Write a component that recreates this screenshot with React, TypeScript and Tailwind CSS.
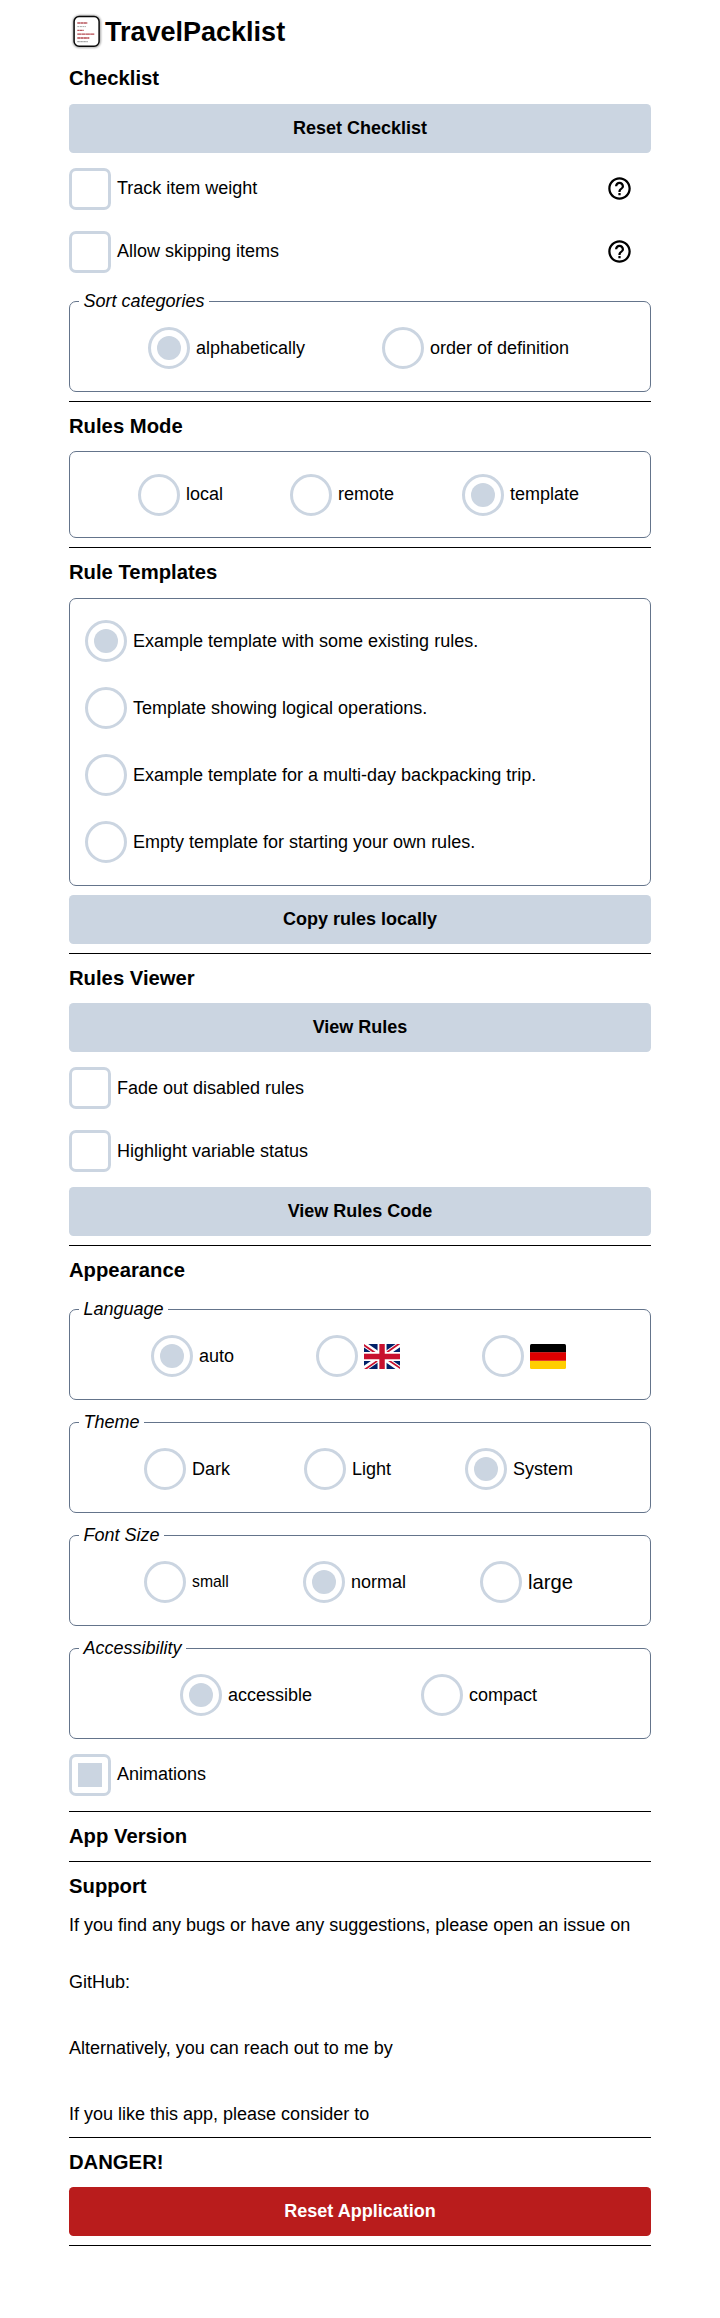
import type { ReactNode } from "react";
import { MdHelpOutline } from "react-icons/md";

function Logo() {
  return (
    <svg width="36" height="40" viewBox="0 0 36 40" className="shrink-0">
      <defs>
        <filter id="soft" x="-20%" y="-20%" width="140%" height="140%">
          <feGaussianBlur stdDeviation="0.9" />
        </filter>
      </defs>
      <rect x="4.8" y="5.2" width="26" height="30.6" rx="5.5" fill="none" stroke="#000" strokeOpacity="0.5" strokeWidth="1.6" filter="url(#soft)" />
      <rect x="5.1" y="5.5" width="25" height="29.8" rx="5" fill="#fff" stroke="#0a0a0a" strokeWidth="1.5" />
      <g fill="none" strokeWidth="1.3">
        <path d="M8.3 12h10.2" stroke="#b8555c" strokeDasharray="3 .3" />
        <path d="M8.3 15.6h8.7" stroke="#a8a8a8" strokeWidth="1" strokeDasharray="2 .6" />
        <path d="M8.3 19.4h6.4" stroke="#b8555c" strokeDasharray="2.4 .3" />
        <path d="M8.3 23.1h17.3" stroke="#b5484f" strokeDasharray="4 .3" />
        <path d="M8.3 27h12" stroke="#b5484f" strokeDasharray="3 .3" />
        <path d="M8.3 30.7h10.5" stroke="#8f8f8f" strokeWidth="1" strokeDasharray="2.5 .5" />
      </g>
    </svg>
  );
}

function FlagGB() {
  return (
    <svg width="36" height="25" viewBox="0 0 640 444" preserveAspectRatio="none">
      <path fill="#012169" d="M0 0h640v444H0z" />
      <path fill="#fff" d="m75 0 244 168L562 0h78v58L400 223l240 164v57h-80L320 279 81 444H0v-56l239-164L0 61V0z" />
      <path fill="#c8102e" d="m424 260 216 147v37L369 260zm-184 19 6 32L54 444H0zM640 0v3L391 176l2-40L590 0zM0 0l239 163h-60L0 39z" />
      <path fill="#fff" d="M241 0v444h160V0zM0 142v160h640V142z" />
      <path fill="#c8102e" d="M0 175v96h640v-96zM273 0v444h96V0z" />
    </svg>
  );
}

function FlagDE() {
  return (
    <svg width="36" height="25" viewBox="0 0 36 25" className="rounded-[1.5px]">
      <path fill="#ffce00" d="M0 16.7h36V25H0z" />
      <path fill="#000" d="M0 0h36v8.4H0z" />
      <path fill="#d00" d="M0 8.3h36v8.5H0z" />
    </svg>
  );
}

function Heading({ children, className = "h-[49px]" }: { children: ReactNode; className?: string }) {
  return <h2 className={`text-[20.25px] leading-[49px] font-bold ${className}`}>{children}</h2>;
}

function Button({ children, color = "bg-[#cbd5e1] text-black" }: { children: ReactNode; color?: string }) {
  return (
    <button className={`block h-[49px] w-full rounded-[4.5px] text-center leading-[49px] font-bold ${color}`}>
      {children}
    </button>
  );
}

function Check({ label, checked, help, text = "" }: { label: string; checked?: boolean; help?: boolean; text?: string }) {
  return (
    <div className="flex h-[42px] items-center">
      <span className="flex size-[42px] shrink-0 items-center justify-center rounded-[7px] border-3 border-[#cbd5e1]">
        {checked && <span className="size-6 bg-[#cbd5e1]" />}
      </span>
      <span className={`ml-1.5 leading-[42px] ${text}`}>{label}</span>
      {help && <MdHelpOutline className="mr-[18px] mb-px ml-auto size-[27px]" />}
    </div>
  );
}

function Radio({ children, checked, text = "" }: { children: ReactNode; checked?: boolean; text?: string }) {
  return (
    <label className="flex h-[42px] items-center gap-1.5">
      <span className="flex size-[42px] shrink-0 items-center justify-center rounded-full border-3 border-[#cbd5e1]">
        {checked && <span className="size-6 rounded-full bg-[#cbd5e1]" />}
      </span>
      <span className={`leading-[42px] whitespace-nowrap ${text}`}>{children}</span>
    </label>
  );
}

function Group({ legend, grid, className = "" }: { legend: string; grid: ReactNode; className?: string }) {
  return (
    <fieldset className={`rounded-[7px] border border-[#64748b] pt-[13px] pb-[22px] ${className}`}>
      <legend className="ml-[9px] px-[4.5px] leading-[25px] italic">{legend}</legend>
      {grid}
    </fieldset>
  );
}

function Rule({ className = "" }: { className?: string }) {
  return <hr className={`h-px border-0 bg-black ${className}`} />;
}

export default function App() {
  return (
    <div className="min-h-[2318px] bg-white font-['Liberation_Sans',Arial,sans-serif] text-[18px] text-black">
      <main className="mx-auto w-[582px]">
        <header className="flex h-[54px] pt-[11px]">
          <Logo />
          <h1 className="h-[43px] text-[27px] leading-[43px] font-bold">TravelPacklist</h1>
        </header>

        <Heading className="h-[50px]">Checklist</Heading>
        <Button>Reset Checklist</Button>
        <div className="mt-[15px] flex flex-col gap-[21px]">
          <Check label="Track item weight" help text="-mt-0.5" />
          <Check label="Allow skipping items" help text="-mt-0.5" />
        </div>
        <Group
          legend="Sort categories"
          className="mt-4"
          grid={
            <div className="grid grid-cols-[234px_auto] pl-[78px]">
              <Radio checked>alphabetically</Radio>
              <Radio>order of definition</Radio>
            </div>
          }
        />
        <Rule className="mt-[9px]" />

        <Heading>Rules Mode</Heading>
        <fieldset className="rounded-[7px] border border-[#64748b] pt-[22px] pb-[21px]">
          <div className="grid grid-cols-[152px_172px_auto] pl-[68px]">
            <Radio text="-mt-0.5">local</Radio>
            <Radio text="-mt-0.5">remote</Radio>
            <Radio checked text="-mt-0.5">template</Radio>
          </div>
        </fieldset>
        <Rule className="mt-[9px]" />

        <Heading className="h-[50px]">Rule Templates</Heading>
        <fieldset className="rounded-[7px] border border-[#64748b] px-[15px] pt-[21px] pb-[22px]">
          <div className="flex flex-col gap-[25px]">
            <Radio checked>Example template with some existing rules.</Radio>
            <Radio>Template showing logical operations.</Radio>
            <Radio>Example template for a multi-day backpacking trip.</Radio>
            <Radio>Empty template for starting your own rules.</Radio>
          </div>
        </fieldset>
        <div className="mt-[9px]">
          <Button>Copy rules locally</Button>
        </div>
        <Rule className="mt-[9px]" />

        <Heading>Rules Viewer</Heading>
        <Button>View Rules</Button>
        <div className="my-[15px] flex flex-col gap-[21px]">
          <Check label="Fade out disabled rules" />
          <Check label="Highlight variable status" />
        </div>
        <Button>View Rules Code</Button>
        <Rule className="mt-[9px]" />

        <Heading>Appearance</Heading>
        <div className="flex flex-col gap-2.5 pt-0.5">
          <Group
            legend="Language"
            grid={
              <div className="grid grid-cols-[165px_166px_auto] pl-[81px]">
                <Radio checked>auto</Radio>
                <Radio text="flex"><FlagGB /></Radio>
                <Radio text="flex"><FlagDE /></Radio>
              </div>
            }
          />
          <Group
            legend="Theme"
            grid={
              <div className="grid grid-cols-[160px_161px_auto] pl-[74px]">
                <Radio>Dark</Radio>
                <Radio>Light</Radio>
                <Radio checked>System</Radio>
              </div>
            }
          />
          <Group
            legend="Font Size"
            grid={
              <div className="grid grid-cols-[159px_177px_auto] pl-[74px]">
                <Radio text="text-[15.75px]">small</Radio>
                <Radio checked>normal</Radio>
                <Radio text="text-[20.25px]">large</Radio>
              </div>
            }
          />
          <Group
            legend="Accessibility"
            grid={
              <div className="grid grid-cols-[241px_auto] pl-[110px]">
                <Radio checked>accessible</Radio>
                <Radio>compact</Radio>
              </div>
            }
          />
        </div>
        <div className="my-[15px]">
          <Check label="Animations" checked text="-mt-0.5" />
        </div>
        <Rule />

        <Heading>App Version</Heading>
        <Rule />

        <Heading className="h-[35px]">Support</Heading>
        <p className="leading-[57px]">
          If you find any bugs or have any suggestions, please open an issue on GitHub:
        </p>
        <p className="mt-[9px] leading-[57px]">Alternatively, you can reach out to me by</p>
        <p className="mt-[15px] leading-[45px]">If you like this app, please consider to</p>
        <Rule />

        <Heading>DANGER!</Heading>
        <Button color="bg-[#b91c1c] text-white">Reset Application</Button>
        <Rule className="mt-[9px]" />
      </main>
    </div>
  );
}
